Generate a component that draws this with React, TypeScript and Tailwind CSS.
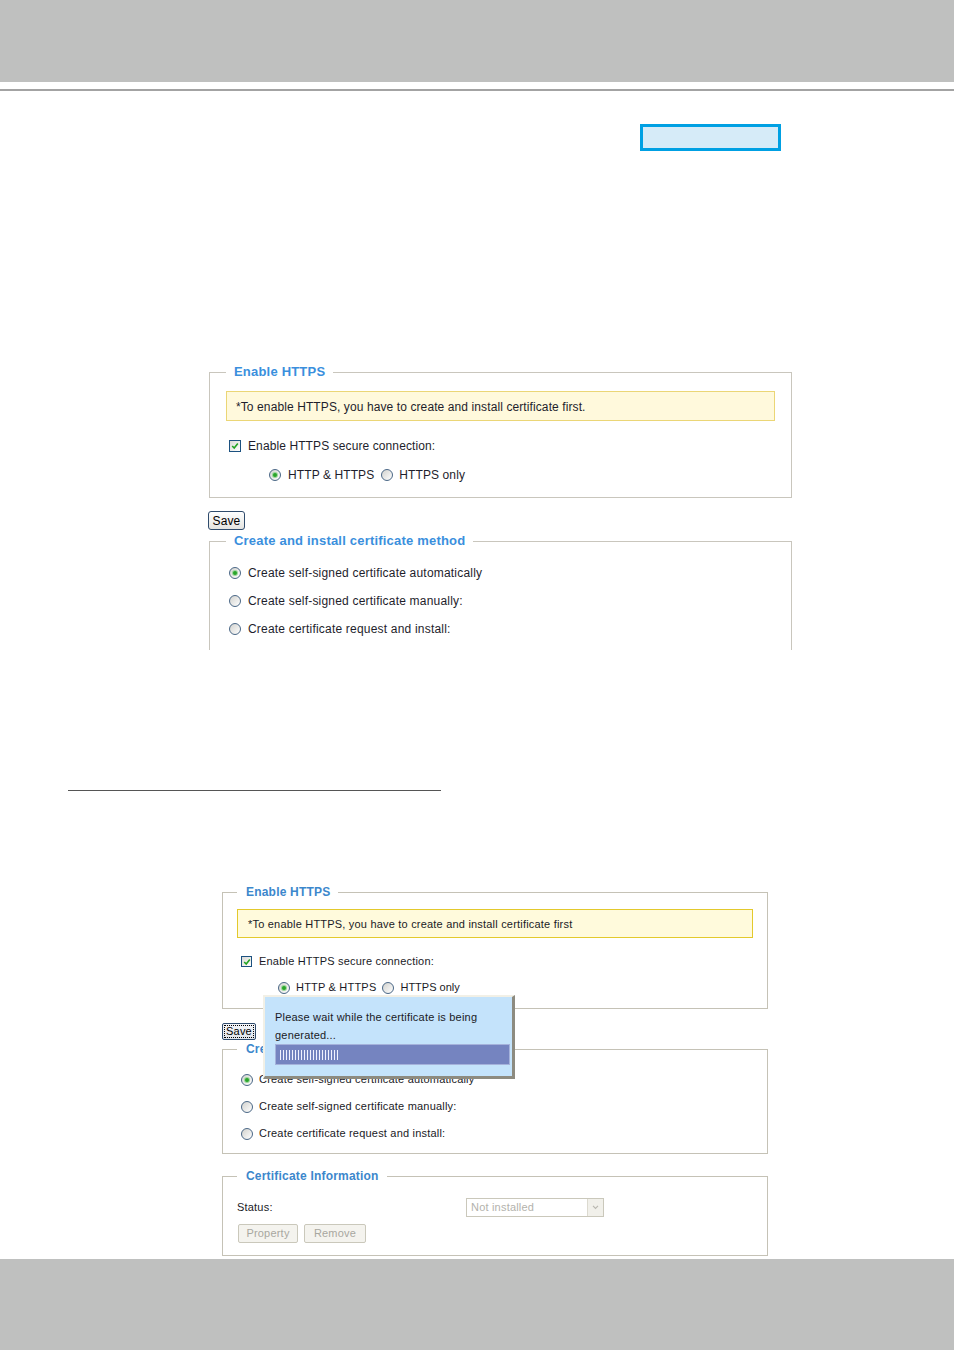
import React from "react";

function CheckBox({ className }: { className: string }) {
  return (
    <span
      className={`flex shrink-0 items-center justify-center border border-[#1c5180] bg-gradient-to-br from-[#d9d9d4] to-white ${className}`}
    >
      <svg viewBox="0 0 10 10" className="h-[8px] w-[8px]">
        <path d="M1.5 5 L4 7.5 L8.5 2" fill="none" stroke="#22a322" strokeWidth="2" />
      </svg>
    </span>
  );
}

function Radio({ checked, className }: { checked?: boolean; className: string }) {
  return (
    <span
      className={`flex shrink-0 items-center justify-center rounded-full border border-[#4a6786] bg-gradient-to-br from-[#d2d2ce] to-white ${className}`}
    >
      {checked && (
        <span className="h-[4px] w-[4px] rounded-full bg-[#2aa52a] shadow-[0_0_0_1px_#9ad69a]" />
      )}
    </span>
  );
}

function FirstShot() {
  return (
    <div className="ml-[209px] mt-[213px] w-[583px] text-[12px] tracking-[0.1px] text-[#1e1e2c]">
      <fieldset className="border border-[#c9c6bd] px-4 pb-[12px]">
        <legend className="px-2 text-[13px] font-bold leading-4 tracking-[0.2px] text-[#3a8fdd]">
          Enable HTTPS
        </legend>
        <div className="mt-[11px] flex h-[30px] items-center border border-[#ebd676] bg-[#fff9dc] pl-[9px] pt-px">
          *To enable HTTPS, you have to create and install certificate first.
        </div>
        <div className="mt-[15px] flex h-5 items-center">
          <CheckBox className="ml-[3px] h-[12px] w-[12px]" />
          <span className="ml-[7px]">Enable HTTPS secure connection:</span>
        </div>
        <div className="mt-[9px] flex h-5 items-center pl-[43px]">
          <Radio checked className="h-[12px] w-[12px]" />
          <span className="ml-[7px]">HTTP &amp; HTTPS</span>
          <Radio className="ml-[7px] h-[12px] w-[12px]" />
          <span className="ml-[6px]">HTTPS only</span>
        </div>
      </fieldset>

      <button className="ml-[-1px] mt-[13px] flex h-[19px] w-[37px] items-center justify-center rounded-[3px] border border-[#2f4b6c] bg-gradient-to-b from-white to-[#e4e4e0] text-[12px] text-black">
        Save
      </button>

      <fieldset className="mt-[3px] h-[117px] overflow-hidden border border-b-0 border-[#c9c6bd] px-4">
        <legend className="px-2 text-[13px] font-bold leading-4 tracking-[0.2px] text-[#3a8fdd]">
          Create and install certificate method
        </legend>
        <div className="mt-[14px] flex h-5 items-center">
          <Radio checked className="ml-[3px] h-[12px] w-[12px]" />
          <span className="ml-[7px] tracking-[0.2px]">Create self-signed certificate automatically</span>
        </div>
        <div className="mt-2 flex h-5 items-center">
          <Radio className="ml-[3px] h-[12px] w-[12px]" />
          <span className="ml-[7px] tracking-[0.2px]">Create self-signed certificate manually:</span>
        </div>
        <div className="mt-2 flex h-5 items-center">
          <Radio className="ml-[3px] h-[12px] w-[12px]" />
          <span className="ml-[7px] tracking-[0.2px]">Create certificate request and install:</span>
        </div>
      </fieldset>
    </div>
  );
}

function SecondShot() {
  const bars = Array.from({ length: 20 }, (_, i) => i);
  return (
    <div className="relative ml-[222px] mt-[94px] w-[546px] text-[11px] tracking-[0.2px] text-[#1a1a26]">
      <fieldset className="border border-[#c5c2b6] px-[14px] pb-[11px]">
        <legend className="pl-[9px] pr-2 text-[12px] font-bold leading-[14px] tracking-[0.2px] text-[#3c87cc]">
          Enable HTTPS
        </legend>
        <div className="mt-[10px] flex h-[29px] items-center border border-[#e3c92c] bg-[#fffadc] pl-[10px] pt-px">
          *To enable HTTPS, you have to create and install certificate first
        </div>
        <div className="mt-[14px] flex h-[19px] items-center">
          <CheckBox className="ml-[4px] h-[11px] w-[11px]" />
          <span className="ml-[7px]">Enable HTTPS secure connection:</span>
        </div>
        <div className="mt-[7px] flex h-[19px] items-center pl-[41px]">
          <Radio checked className="h-[12px] w-[12px]" />
          <span className="ml-[6px]">HTTP &amp; HTTPS</span>
          <Radio className="ml-[6px] h-[12px] w-[12px]" />
          <span className="ml-[6px] tracking-[0px]">HTTPS only</span>
        </div>
      </fieldset>

      <button className="mt-[14px] flex h-[17px] w-[34px] items-center justify-center rounded-[2px] border border-[#2f4b6c] bg-gradient-to-b from-[#f4f6fa] to-[#dfe3ea] p-[1px] text-[11px] text-black">
        <span className="flex h-full w-full items-center justify-center border border-dotted border-black">
          Save
        </span>
      </button>

      <fieldset className="mt-[2px] border border-[#c5c2b6] px-[14px] pb-[10px]">
        <legend className="pl-[9px] pr-2 text-[12px] font-bold leading-[14px] tracking-[0.2px] text-[#3c87cc]">
          Create and install certificate method
        </legend>
        <div className="mt-[14px] flex h-[19px] items-center">
          <Radio checked className="ml-[4px] h-[12px] w-[12px]" />
          <span className="ml-[6px]">Create self-signed certificate automatically</span>
        </div>
        <div className="mt-[8px] flex h-[19px] items-center">
          <Radio className="ml-[4px] h-[12px] w-[12px]" />
          <span className="ml-[6px]">Create self-signed certificate manually:</span>
        </div>
        <div className="mt-[8px] flex h-[19px] items-center">
          <Radio className="ml-[4px] h-[12px] w-[12px]" />
          <span className="ml-[6px]">Create certificate request and install:</span>
        </div>
      </fieldset>

      <fieldset className="mt-[15px] border border-[#c5c2b6] px-[14px] pb-[12px]">
        <legend className="pl-[9px] pr-2 text-[12px] font-bold leading-[14px] tracking-[0.2px] text-[#3c87cc]">
          Certificate Information
        </legend>
        <div className="mt-[15px] flex h-[19px] items-center">
          <span className="w-[229px]">Status:</span>
          <div className="flex h-[19px] w-[138px] items-stretch border border-[#cac8bb] bg-white">
            <span className="flex flex-1 items-center pl-[4px] text-[#b3b2ac]">Not installed</span>
            <span className="flex w-[16px] items-center justify-center border-l border-[#dcdad0] bg-[#f1f0ea]">
              <svg viewBox="0 0 8 6" className="h-[5px] w-[7px]">
                <path d="M1 1 L4 4 L7 1" fill="none" stroke="#b9b8b0" strokeWidth="1.4" />
              </svg>
            </span>
          </div>
        </div>
        <div className="mt-[7px] flex h-[19px] items-stretch gap-[6px] pl-[1px]">
          <span className="flex w-[60px] items-center justify-center rounded-[2px] border border-[#cac8bb] bg-[#f4f3ee] text-[#a8a7a0]">
            Property
          </span>
          <span className="flex w-[62px] items-center justify-center rounded-[2px] border border-[#cac8bb] bg-[#f4f3ee] text-[#a8a7a0]">
            Remove
          </span>
        </div>
      </fieldset>

      <div className="absolute left-[41px] top-[110px] h-[84px] w-[252px] border-l-2 border-r-[3px] border-t-2 border-b-[3px] border-l-[#f2f0e6] border-r-[#8d8b80] border-t-[#f2f0e6] border-b-[#8d8b80] bg-[#c4e3fb] pl-[10px] pt-[11px]">
        <p className="leading-[18px]">
          Please wait while the certificate is being
          <br />
          generated...
        </p>
        <div className="flex h-[21px] w-[235px] items-center gap-[2px] border border-[#a5b2db] bg-[#7584c0] pl-[4px]">
          {bars.map((i) => (
            <span key={i} className="h-[10px] w-px bg-[#f1f1ff]" />
          ))}
        </div>
      </div>
    </div>
  );
}

export default function App() {
  return (
    <div className="flex h-[1350px] w-[954px] flex-col bg-white font-['Liberation_Sans',Arial,sans-serif]">
      <div className="h-[82px] bg-[#bfc0bf]" />
      <div className="mt-[7px] h-[2px] bg-[#a3a3a3]" />
      <div className="ml-[640px] mt-[33px] h-[27px] w-[141px] border-[3px] border-[#00a0e3] bg-[#d6ebf8]" />

      <FirstShot />

      <div className="ml-[68px] mt-[140px] h-px w-[373px] bg-[#555555]" />

      <SecondShot />

      <div className="mt-auto h-[91px] bg-[#bfc0bf]" />
    </div>
  );
}
